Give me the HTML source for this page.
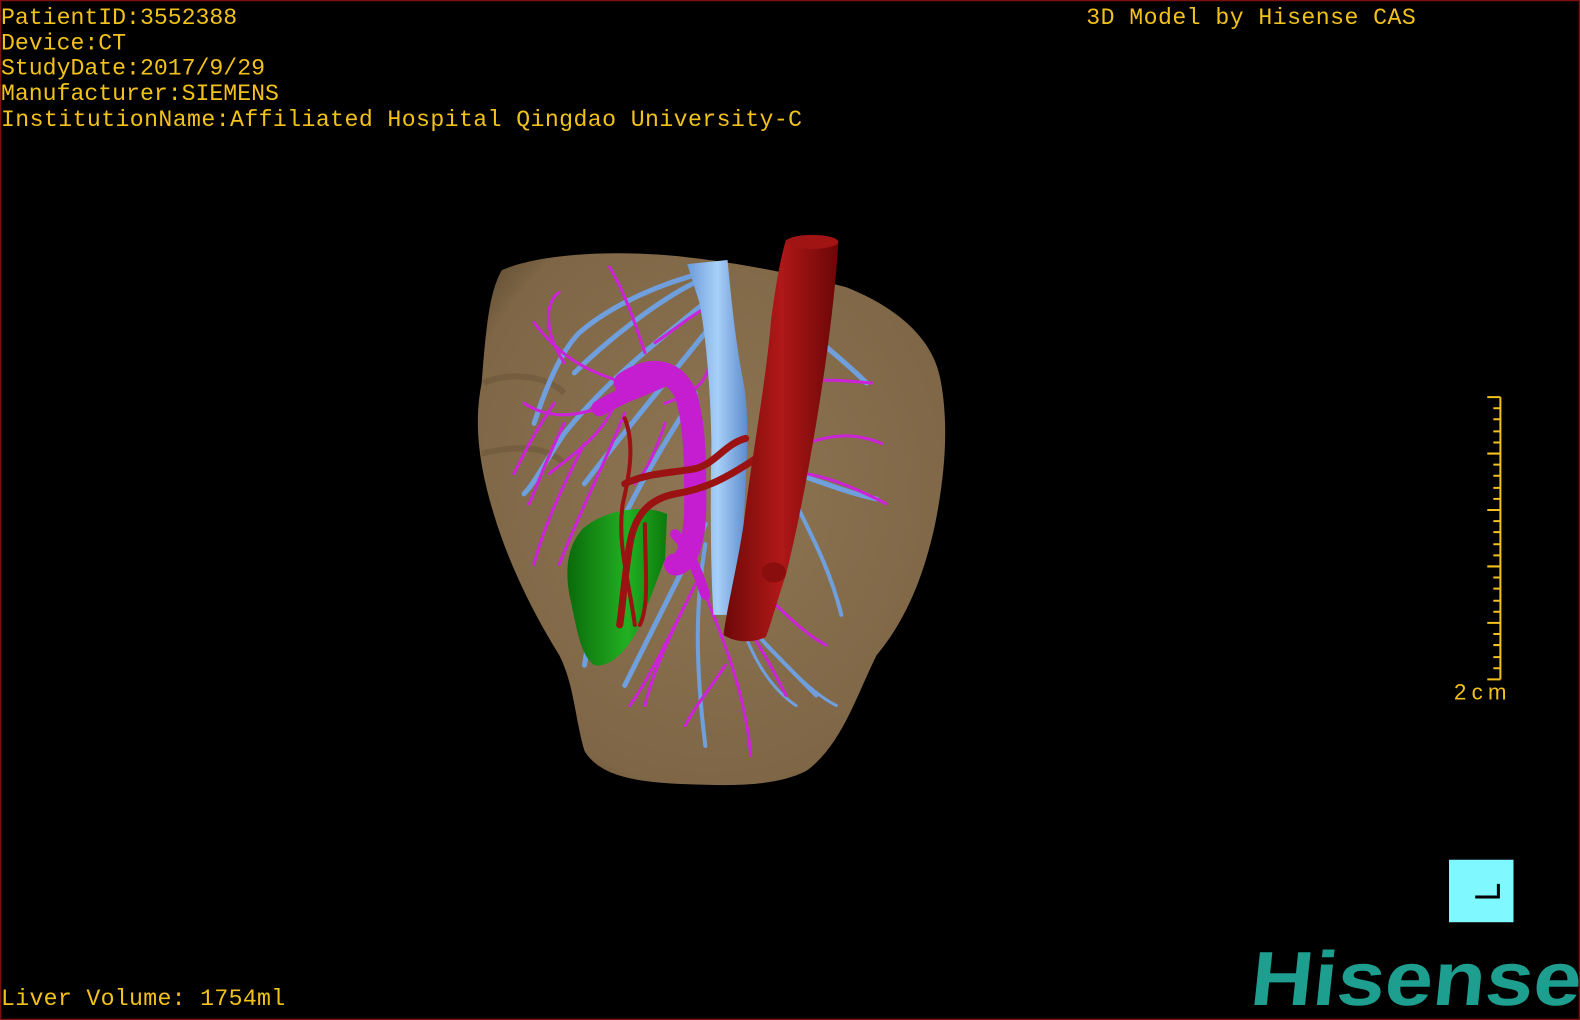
<!DOCTYPE html>
<html><head><meta charset="utf-8"><style>
html,body{margin:0;padding:0;background:#000;width:1580px;height:1020px;overflow:hidden}
svg{display:block}
.t{font-family:"Liberation Mono","DejaVu Sans Mono",monospace;font-size:23px;fill:#f2c21b}
</style></head><body>
<svg width="1580" height="1020" viewBox="0 0 1568 1012" preserveAspectRatio="none" xmlns="http://www.w3.org/2000/svg">
<defs>
<radialGradient id="lv" cx="0.5" cy="0.45" r="0.65"><stop offset="0" stop-color="#8e7654"/><stop offset="0.85" stop-color="#7e6646"/><stop offset="1" stop-color="#5e4a30"/></radialGradient>
<linearGradient id="ao" x1="0" x2="1"><stop offset="0" stop-color="#6e0808"/><stop offset="0.5" stop-color="#b01818"/><stop offset="1" stop-color="#6a0606"/></linearGradient>
<linearGradient id="iv" x1="0" x2="1"><stop offset="0" stop-color="#6a9ad8"/><stop offset="0.5" stop-color="#a8d0f8"/><stop offset="1" stop-color="#5e8ccc"/></linearGradient>
<linearGradient id="gb" x1="0" x2="1"><stop offset="0" stop-color="#0a6a0a"/><stop offset="0.6" stop-color="#22b022"/><stop offset="1" stop-color="#0c7a0c"/></linearGradient>
</defs>
<rect x="0.5" y="0.5" width="1567" height="1011" fill="#000" stroke="#7a1010" stroke-width="1.5"/>
<path d="M498,268 C540,250 620,248 680,255 C740,262 790,272 840,285 C890,305 925,335 933,375 C942,420 938,470 928,520 C915,580 895,620 870,650 C850,690 835,740 800,765 C770,780 730,780 680,778 C630,776 595,770 580,745 C570,710 570,680 555,650 C530,610 505,560 490,510 C475,460 470,420 478,380 C482,330 485,290 498,268 Z" fill="url(#lv)"/>
<path d="M480,380 C500,370 540,370 560,390 M478,450 C520,440 545,445 560,460" stroke="#6a5438" stroke-width="6" fill="none" opacity="0.5"/>
<g fill="none" stroke-linecap="round">
<g stroke="#6f9fdc" stroke-width="5">
<path d="M700,270 C660,280 610,300 575,330 C555,350 540,390 530,420"/>
<path d="M690,280 C650,300 600,340 570,370"/>
<path d="M700,300 C650,340 600,380 560,430 C540,460 530,480 520,490"/>
<path d="M700,330 C660,380 610,440 580,480"/>
<path d="M690,390 C660,440 620,500 600,560 C590,600 585,630 580,660"/>
<path d="M700,520 C680,560 660,600 640,640 C630,660 625,670 620,680"/>
<path d="M700,540 C690,600 690,660 700,740" stroke-width="4"/>
<path d="M710,580 C740,620 770,650 810,690" stroke-width="4"/>
<path d="M770,300 C800,330 830,350 860,380"/>
<path d="M790,470 C820,480 845,490 870,495"/>
<path d="M790,500 C810,540 825,570 835,610" stroke-width="4"/>
<path d="M730,600 C740,640 760,680 790,700" stroke-width="3"/>
<path d="M760,640 C790,670 810,690 830,700" stroke-width="3"/>
</g>
<g stroke="#cc22d8" stroke-width="3">
<path d="M620,380 C590,370 560,360 530,320"/>
<path d="M610,400 C580,410 550,420 520,400"/>
<path d="M610,400 C600,430 570,450 545,470"/>
<path d="M620,410 C600,460 570,520 555,560"/>
<path d="M640,350 C630,320 620,290 605,265"/>
<path d="M650,340 C680,320 700,300 720,300"/>
<path d="M660,400 C690,390 700,380 705,360"/>
<path d="M800,440 C830,430 850,430 875,440"/>
<path d="M800,470 C830,475 860,490 880,500"/>
<path d="M790,380 C820,375 840,378 865,380"/>
<path d="M690,580 C670,620 650,660 640,700"/>
<path d="M700,590 C720,640 740,690 745,750"/>
<path d="M760,590 C780,610 800,630 820,640"/>
<path d="M680,600 C660,640 640,680 625,700"/>
<path d="M560,360 C540,330 540,300 555,290"/>
<path d="M550,400 C530,430 520,450 510,470"/>
<path d="M560,420 C540,460 530,490 525,500"/>
<path d="M580,440 C560,480 540,520 530,560"/>
<path d="M740,620 C760,650 770,670 780,690"/>
<path d="M720,660 C700,690 690,700 680,720"/>
<path d="M660,420 C650,450 640,470 630,480"/>
</g>
<path d="M620,380 C650,360 670,370 680,390 C690,420 690,460 690,500 C690,540 680,560 670,560" stroke="#c41ed0" stroke-width="22"/>
<path d="M595,405 C620,390 640,385 660,375" stroke="#c41ed0" stroke-width="16"/>
<path d="M700,590 C690,560 680,540 670,530" stroke="#c41ed0" stroke-width="10"/>
</g>
<path d="M682,262 L722,258 C726,300 730,340 738,380 C745,420 740,470 738,520 C735,560 730,590 722,610 L708,610 C705,560 705,500 706,440 C705,380 700,330 694,300 Z" fill="url(#iv)"/>
<path d="M578,525 C600,505 640,500 662,510 L660,555 C650,580 640,610 630,630 C615,655 600,662 590,660 C575,650 572,620 565,590 C560,560 565,540 578,525 Z" fill="url(#gb)"/>
<g fill="none" stroke="#9a1212" stroke-linecap="round">
<path d="M740,435 C720,440 710,460 690,465 C660,470 640,470 620,480" stroke-width="7"/>
<path d="M750,455 C720,475 700,485 670,490 C645,495 630,510 625,540 C620,570 618,600 615,620" stroke-width="7"/>
<path d="M620,415 C630,440 625,470 618,500 C612,540 625,580 630,620" stroke-width="4"/>
<path d="M640,520 C640,560 645,600 635,620" stroke-width="4"/>
</g>
<path d="M780,238 C800,232 825,235 832,242 C828,300 820,360 810,420 C800,480 790,530 780,570 C770,600 765,620 760,632 C748,638 730,638 718,630 C722,600 732,560 738,520 C745,460 760,380 765,320 C770,280 775,255 780,238 Z" fill="url(#ao)"/>
<ellipse cx="806" cy="240" rx="26" ry="7" fill="#a01414"/>
<ellipse cx="768" cy="568" rx="12" ry="10" fill="#8a0e0e"/>
<text class="t" x="1" y="24">PatientID:3552388</text>
<text class="t" x="1" y="49">Device:CT</text>
<text class="t" x="1" y="74">StudyDate:2017/9/29</text>
<text class="t" x="1" y="99">Manufacturer:SIEMENS</text>
<text class="t" x="1" y="125" textLength="795">InstitutionName:Affiliated Hospital Qingdao University-C</text>
<text class="t" x="1078" y="24" textLength="327">3D Model by Hisense CAS</text>
<text class="t" x="1" y="997" textLength="282">Liver Volume: 1754ml</text>
<g stroke="#f2c21b" stroke-width="2" fill="none">
<path d="M1489,394 L1489,674"/>
<path d="M1476,394H1489M1482,405H1489M1482,416H1489M1482,428H1489M1482,439H1489M1476,450H1489M1482,461H1489M1482,472H1489M1482,484H1489M1482,495H1489M1476,506H1489M1482,517H1489M1482,528H1489M1482,540H1489M1482,551H1489M1476,562H1489M1482,573H1489M1482,584H1489M1482,596H1489M1482,607H1489M1476,618H1489M1482,629H1489M1482,640H1489M1482,652H1489M1482,663H1489M1476,674H1489"/>
</g>
<text class="t" x="1443" y="694" style="font-family:'Liberation Sans',sans-serif;font-size:22px" textLength="52">2cm</text>
<rect x="1438" y="853" width="64" height="62" fill="#7ff8ff"/>
<path d="M1464,890 H1487 V877" stroke="#000" stroke-width="3" fill="none"/>
<text x="1240" y="997" transform="skewX(-6) translate(104,0)" style="font-family:'Liberation Sans',sans-serif;font-weight:bold;font-size:76px;fill:#1e9e8e" textLength="328" lengthAdjust="spacingAndGlyphs">Hisense</text>
</svg>
</body></html>
